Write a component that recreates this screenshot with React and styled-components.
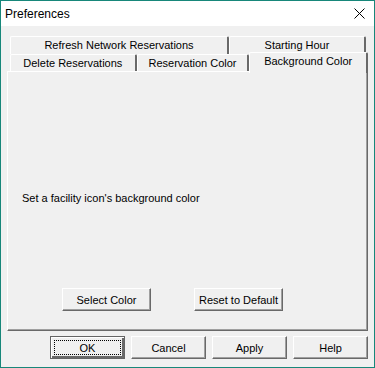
import styled, { createGlobalStyle, css } from 'styled-components';

const Global = createGlobalStyle`
  html, body { margin: 0; padding: 0; background: #f0f0f0; }
  body { font-family: "Liberation Sans", Arial, sans-serif; }
`;

const Window = styled.div`
  box-sizing: border-box;
  width: 375px;
  height: 368px;
  border: 1px solid #17877a;
  background: #f0f0f0;
  display: flex;
  flex-direction: column;
`;

const TitleBar = styled.div`
  height: 25px;
  background: #fff;
  display: flex;
  align-items: center;
  justify-content: space-between;
  padding: 0 4px;
  font-size: 12px;
  color: #000;
`;

const Close = styled.svg`
  width: 11px;
  height: 11px;
  margin-right: 5px;
`;

const Body = styled.div`
  flex: 1;
  padding: 10px 6px 0 6px;
  display: flex;
  flex-direction: column;
`;

const TabArea = styled.div`
  display: flex;
  flex-direction: column;
  padding: 0 0 0 3px;
`;

const TabRow = styled.div`
  display: flex;
  height: 18px;
`;

const Tab = styled.div`
  box-sizing: border-box;
  width: ${p => p.$w}px;
  height: 18px;
  border-top: 1px solid #fff;
  border-left: 1px solid #fff;
  border-right: 2px solid #696969;
  border-radius: 2px 2px 0 0;
  background: #f0f0f0;
  display: flex;
  justify-content: center;
  padding-top: 2px;
  font-size: 11px;
  color: #000;
  white-space: nowrap;
  ${p => p.$active && css`
    position: relative;
    margin-top: -2px;
    height: 21px;
    padding-top: 2px;
    z-index: 2;
  `}
`;

const Panel = styled.div`
  box-sizing: border-box;
  height: 260px;
  margin-top: -1px;
  border-top: 1px solid #fff;
  border-left: 1px solid #fff;
  border-right: 1px solid #696969;
  border-bottom: 1px solid #696969;
  box-shadow: inset -1px -1px 0 #a0a0a0;
  display: flex;
  flex-direction: column;
  padding: 0 14px;
`;

const Caption = styled.div`
  font-size: 11px;
  color: #000;
  margin-top: 120px;
`;

const PanelButtons = styled.div`
  display: flex;
  gap: 43px;
  margin-top: 84px;
  padding-left: 40px;
`;

const Button = styled.div`
  box-sizing: border-box;
  width: ${p => p.$w || 75}px;
  height: 23px;
  background: #f0f0f0;
  border-top: 1px solid #fff;
  border-left: 1px solid #fff;
  border-right: 1px solid #696969;
  border-bottom: 1px solid #696969;
  box-shadow: inset -1px -1px 0 #a0a0a0;
  display: flex;
  align-items: center;
  justify-content: center;
  font-size: 11px;
  color: #000;
  ${p => p.$default && css`
    border: 1px solid #646464;
    box-shadow: inset 1px 1px 0 #fff, inset -2px -2px 0 #696969;
  `}
`;

const Focus = styled.span`
  box-sizing: border-box;
  width: 67px;
  height: 15px;
  border: 1px dotted #000;
  display: flex;
  align-items: center;
  justify-content: center;
`;

const Footer = styled.div`
  display: flex;
  justify-content: flex-end;
  gap: 6px;
  padding-top: 5px;
`;

export default function App() {
  return (
    <>
      <Global />
      <Window>
        <TitleBar>
          <span>Preferences</span>
          <Close viewBox="0 0 11 11">
            <path d="M0.5 0.5 L10.5 10.5 M10.5 0.5 L0.5 10.5" stroke="#000" strokeWidth="1" />
          </Close>
        </TitleBar>
        <Body>
          <TabArea>
            <TabRow>
              <Tab $w={219}>Refresh Network Reservations</Tab>
              <Tab $w={137}>Starting Hour</Tab>
            </TabRow>
            <TabRow>
              <Tab $w={127}>Delete Reservations</Tab>
              <Tab $w={113}>Reservation Color</Tab>
              <Tab $w={119} $active>Background Color</Tab>
            </TabRow>
          </TabArea>
          <Panel>
            <Caption>Set a facility icon's background color</Caption>
            <PanelButtons>
              <Button $w={89}>Select Color</Button>
              <Button $w={89}>Reset to Default</Button>
            </PanelButtons>
          </Panel>
          <Footer>
            <Button $default><Focus>OK</Focus></Button>
            <Button>Cancel</Button>
            <Button>Apply</Button>
            <Button>Help</Button>
          </Footer>
        </Body>
      </Window>
    </>
  );
}
